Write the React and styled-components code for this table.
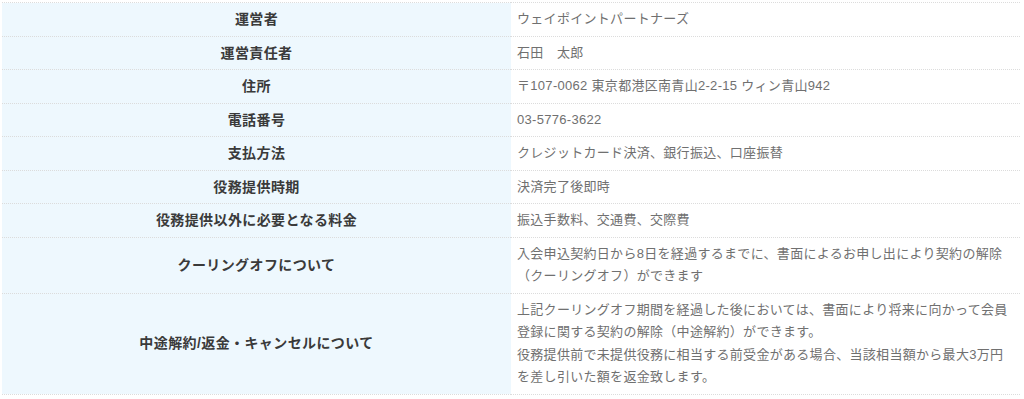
import React from 'react'
import styled, { createGlobalStyle } from 'styled-components'

const GlobalStyle = createGlobalStyle`
  body {
    margin: 0;
    background: #fff;
    font-family: "Liberation Sans", "Noto Sans CJK JP", sans-serif;
  }
`

const rows = [
  { label: '運営者', lines: ['ウェイポイントパートナーズ'] },
  { label: '運営責任者', lines: ['石田　太郎'] },
  { label: '住所', lines: ['〒107-0062 東京都港区南青山2-2-15 ウィン青山942'] },
  { label: '電話番号', lines: ['03-5776-3622'] },
  { label: '支払方法', lines: ['クレジットカード決済、銀行振込、口座振替'] },
  { label: '役務提供時期', lines: ['決済完了後即時'] },
  { label: '役務提供以外に必要となる料金', lines: ['振込手数料、交通費、交際費'] },
  {
    label: 'クーリングオフについて',
    lines: ['入会申込契約日から8日を経過するまでに、書面によるお申し出により契約の解除（クーリングオフ）ができます']
  },
  {
    label: '中途解約/返金・キャンセルについて',
    lines: [
      '上記クーリングオフ期間を経過した後においては、書面により将来に向かって会員登録に関する契約の解除（中途解約）ができます。',
      '役務提供前で未提供役務に相当する前受金がある場合、当該相当額から最大3万円を差し引いた額を返金致します。'
    ]
  }
]

const Wrapper = styled.div`
  padding: 2px 4px 0 2px;
`

const Table = styled.table`
  width: 100%;
  border-collapse: collapse;
  table-layout: fixed;
  border-top: 1px dotted #dcdcdc;
`

const Row = styled.tr`
  border-bottom: 1px dotted #dcdcdc;
`

const Head = styled.th`
  background: #eef8fe;
  color: #3a3a3a;
  font-size: 14px;
  font-weight: bold;
  letter-spacing: 0.4px;
  line-height: 22.5px;
  padding: 5px 6px;
  text-align: center;
  vertical-align: middle;
`

const Cell = styled.td`
  color: #707070;
  font-size: 13px;
  letter-spacing: 0.3px;
  line-height: 22.5px;
  padding: 5px 6px;
  vertical-align: middle;
`

const Line = styled.div`
  word-break: break-all;
`

export default function App() {
  return (
    <Wrapper>
      <GlobalStyle />
      <Table>
        <colgroup>
          <col style={{ width: '50%' }} />
          <col style={{ width: '50%' }} />
        </colgroup>
        <tbody>
          {rows.map(row => (
            <Row key={row.label}>
              <Head>{row.label}</Head>
              <Cell>
                {row.lines.map(line => <Line key={line}>{line}</Line>)}
              </Cell>
            </Row>
          ))}
        </tbody>
      </Table>
    </Wrapper>
  )
}
